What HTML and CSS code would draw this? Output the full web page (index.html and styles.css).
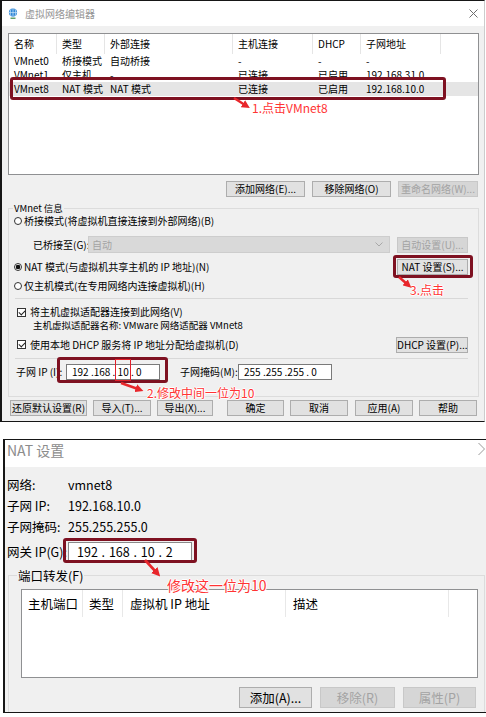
FILE: index.html
```html
<!DOCTYPE html>
<html lang="zh-CN">
<head>
  <meta charset="UTF-8" />
  <meta name="viewport" content="width=device-width, initial-scale=1.0"/>
  <title>虚拟网络编辑器 - NAT 设置</title>
  <link rel="stylesheet" href="styles.css">
</head>
<body>

<div class="win editor">
  <div class="titlebar">
    <svg class="app-icon" width="10" height="11" viewBox="0 0 10 11">
      <circle cx="5" cy="4.6" r="4.1" fill="#2f86d6"/>
      <path d="M1 4.6h8M5 0.6v8M3 1.2c-1 2-1 4.8 0 6.8M7 1.2c1 2 1 4.8 0 6.8" stroke="#d8ecfb" stroke-width="0.7" fill="none"/>
      <path d="M2.5 10.2h5" stroke="#3c8a46" stroke-width="1.2"/>
    </svg>
    <span class="title">虚拟网络编辑器</span>
    <svg class="close" width="9" height="9" viewBox="0 0 9 9">
      <path d="M0.5 0.5L8.5 8.5M8.5 0.5L0.5 8.5" stroke="#6e6e6e" stroke-width="1"/>
    </svg>
  </div>

  <div class="client">
    <div class="netlist">
      <div class="row head">
        <span>名称</span><span>类型</span><span>外部连接</span><span>主机连接</span><span>DHCP</span><span>子网地址</span><span></span>
      </div>
      <div class="row">
        <span>VMnet0</span><span>桥接模式</span><span>自动桥接</span><span>-</span><span>-</span><span>-</span><span></span>
      </div>
      <div class="row">
        <span>VMnet1</span><span>仅主机...</span><span>-</span><span>已连接</span><span>已启用</span><span>192.168.31.0</span><span></span>
      </div>
      <div class="row selected">
        <span>VMnet8</span><span>NAT 模式</span><span>NAT 模式</span><span>已连接</span><span>已启用</span><span>192.168.10.0</span><span></span>
      </div>
    </div>

    <div class="btn-row list-btns">
      <button class="w79">添加网络(E)...</button>
      <button class="w79">移除网络(O)</button>
      <button class="w80" disabled>重命名网络(W)...</button>
    </div>

    <div class="group">
      <div class="group-title">VMnet 信息</div>

      <div class="line opt-first">
        <span class="radio"></span>桥接模式(将虚拟机直接连接到外部网络)(B)
      </div>

      <div class="line bridge-row">
        <span class="field-label">已桥接至(G):</span>
        <div class="select">
          <span>自动</span>
          <svg width="8" height="5" viewBox="0 0 8 5"><path d="M0.5 0.5L4 4L7.5 0.5" stroke="#a8a8a8" fill="none"/></svg>
        </div>
        <button class="w71" disabled>自动设置(U)...</button>
      </div>

      <div class="line nat-row">
        <span class="radio on"></span>NAT 模式(与虚拟机共享主机的 IP 地址)(N)
        <button class="w71 push">NAT 设置(S)...</button>
      </div>

      <div class="line host-row">
        <span class="radio"></span>仅主机模式(在专用网络内连接虚拟机)(H)
      </div>

      <div class="sep sep-first"></div>

      <div class="line check-row">
        <span class="check"></span>将主机虚拟适配器连接到此网络(V)
      </div>
      <div class="line adapter-name">主机虚拟适配器名称: VMware 网络适配器 VMnet8</div>

      <div class="line dhcp-row">
        <span class="check"></span>使用本地 DHCP 服务将 IP 地址分配给虚拟机(D)
        <button class="w72 push">DHCP 设置(P)...</button>
      </div>

      <div class="sep sep-second"></div>

      <div class="line subnet-row">
        <span class="subnet-label">子网 IP (I):</span>
        <span class="ip">192 .168 . 10 . 0</span>
        <span class="mask-label">子网掩码(M):</span>
        <span class="ip">255 .255 .255 . 0</span>
      </div>
    </div>

    <div class="btn-row bottom-btns">
      <button class="w77">还原默认设置(R)</button>
      <button class="w58">导入(T)...</button>
      <button class="w56">导出(X)...</button>
      <button class="w57 push">确定</button>
      <button class="w58">取消</button>
      <button class="w58 gap7">应用(A)</button>
      <button class="w58">帮助</button>
    </div>
  </div>
</div>

<div class="win nat">
  <div class="titlebar nat-title">
    <span class="title">NAT 设置</span>
  </div>
  <div class="client nat-client">
    <div class="kv"><span class="k">网络:</span><span>vmnet8</span></div>
    <div class="kv"><span class="k">子网 IP:</span><span>192.168.10.0</span></div>
    <div class="kv"><span class="k">子网掩码:</span><span>255.255.255.0</span></div>
    <div class="kv gw-row"><span class="k">网关 IP(G):</span><span class="ip gw">192 . 168 . 10 . 2</span></div>

    <div class="pf-group">
      <div class="group-title">端口转发(F)</div>
      <div class="pf-list">
        <div class="pf-head">
          <span>主机端口</span><span>类型</span><span>虚拟机 IP 地址</span><span>描述</span><span></span>
        </div>
      </div>
      <div class="btn-row pf-btns">
        <button class="w73">添加(A)...</button>
        <button class="w75" disabled>移除(R)</button>
        <button class="w73" disabled>属性(P)</button>
      </div>
    </div>
  </div>
</div>

<!-- annotations drawn over the screenshots -->
<div class="mark m-row"></div>
<div class="mark m-nat-btn"></div>
<div class="mark m-subnet"></div>
<div class="mark-thin m-ten"></div>
<div class="mark m-gateway"></div>

<div class="note n1">1.点击VMnet8</div>
<div class="note n2">2.修改中间一位为10</div>
<div class="note n3">3.点击</div>
<div class="note n4">修改这一位为10</div>

<svg class="arrows" width="486" height="717" viewBox="0 0 486 717">
  <defs>
    <marker id="head" viewBox="0 0 10 10" refX="3" refY="5" markerWidth="3.4" markerHeight="3.4" orient="auto">
      <path d="M0 0L10 5L0 10z" fill="#e8262b"/>
    </marker>
  </defs>
  <path d="M234 98L245 105" stroke="#e8262b" stroke-width="2.4" marker-end="url(#head)"/>
  <path d="M121 383L138 389" stroke="#e8262b" stroke-width="2.4" marker-end="url(#head)"/>
  <path d="M399 277L407 284" stroke="#e8262b" stroke-width="2.4" marker-end="url(#head)"/>
  <path d="M145 560L156 572" stroke="#e8262b" stroke-width="2.6" marker-end="url(#head)"/>
  <path d="M478.5 443L484.5 449L478.5 455" stroke="#9a9a9a" fill="none"/>
</svg>

</body>
</html>
```

FILE: styles.css
```css
* {
  box-sizing: border-box;
}

body {
  margin: 0;
  width: 486px;
  height: 717px;
  overflow: hidden;
  position: relative;
  background: #ffffff;
  color: #000;
  font-family: "Noto Sans CJK SC", sans-serif;
  font-size: 10px;
  line-height: 12px;
}

button {
  font: inherit;
  color: #000;
  background: #e1e1e1;
  border: 1px solid #adadad;
  padding: 0;
  height: 16px;
  line-height: 14px;
  text-align: center;
  white-space: nowrap;
}

button:disabled {
  background: #d6d6d6;
  border-color: #c8c8c8;
  color: #a3a3a3;
}

.w56 { width: 56px; }
.w57 { width: 57px; }
.w58 { width: 58px; }
.w71 { width: 71px; }
.w72 { width: 72px; }
.w73 { width: 73px; }
.w75 { width: 75px; }
.w77 { width: 77px; }
.w79 { width: 79px; }
.w80 { width: 80px; }

.push {
  margin-left: auto;
}

/* window frames */
.win {
  background: #f0f0f0;
}

.editor {
  width: 485px;
  height: 422px;
  border: solid #161616;
  border-width: 1px 1px 1px 2px;
  border-right-color: #cccccc;
}

.titlebar {
  display: flex;
  align-items: center;
  height: 25px;
  background: #fff;
  padding-left: 6px;
}

.app-icon {
  margin-right: 7px;
}

.title {
  color: #959595;
  font-size: 10px;
}

.close {
  margin-left: auto;
  margin-right: 6px;
}

.client {
  height: 394px;
  padding: 7px 5px 0 6px;
}

/* network list */
.netlist {
  height: 142px;
  background: #fff;
  border: 1px solid #8f9092;
}

.row {
  display: grid;
  grid-template-columns: 48px 48px 128px 80px 48px 80px 1fr;
  height: 14px;
  line-height: 14px;
}

.row span {
  padding-left: 5px;
  white-space: nowrap;
  overflow: hidden;
}

.row.head {
  height: 20px;
  line-height: 20px;
}

.row.head span {
  border-right: 1px solid #e5e5e5;
}

.row.head span:last-child {
  border-right: none;
}

.row.selected {
  background: #e5e5e5;
}

.btn-row {
  display: flex;
  gap: 7px;
}

.list-btns {
  justify-content: flex-end;
  margin-top: 6px;
  padding-right: 1px;
}

/* VMnet info group */
.group {
  height: 189px;
  margin-top: 11px;
  border: 1px solid #dcdcdc;
  padding: 0 10px 0 5px;
}

.group-title {
  display: table;
  margin: -6px 0 0 -1px;
  padding: 0 1px;
  background: #f0f0f0;
  font-size: 9.5px;
  line-height: 11px;
}

.line {
  display: flex;
  align-items: center;
  white-space: nowrap;
}

.opt-first {
  height: 11px;
  margin-top: 1px;
}

.radio {
  width: 8px;
  height: 8px;
  border: 1px solid #333;
  border-radius: 50%;
  background: #fff;
  margin-right: 2px;
  flex: none;
}

.radio.on {
  background: radial-gradient(circle, #111 0 2px, #fff 2.6px);
}

.bridge-row {
  height: 17px;
  margin-top: 10px;
}

.field-label {
  width: 74px;
  padding-left: 19px;
  flex: none;
}

.select {
  flex: 1;
  height: 17px;
  margin-right: 7px;
  background: #d9d9d9;
  border: 1px solid #cdcdcd;
  color: #a3a3a3;
  display: flex;
  align-items: center;
  justify-content: space-between;
  padding: 0 6px 0 3px;
}

.nat-row {
  height: 16px;
  margin-top: 6px;
}

.host-row {
  height: 12px;
  margin-top: 5px;
}

.sep {
  height: 1px;
  background: #d8d8d8;
  margin-left: 1px;
}

.sep-first {
  margin-top: 6px;
}

.check-row {
  height: 12px;
  margin-top: 7px;
}

.check {
  width: 9px;
  height: 9px;
  border: 1px solid #333;
  background: #fff;
  margin: 0 4px 0 3px;
  flex: none;
  position: relative;
}

.check::after {
  content: "";
  position: absolute;
  left: 2px;
  top: 0;
  width: 3px;
  height: 5px;
  border: solid #222;
  border-width: 0 1.2px 1.2px 0;
  transform: rotate(45deg);
}

.adapter-name {
  height: 12px;
  margin-top: 1px;
  padding-left: 19px;
  font-size: 9.5px;
}

.dhcp-row {
  height: 17px;
  margin-top: 5px;
}

.sep-second {
  margin-top: 5px;
}

.subnet-row {
  height: 16px;
  margin-top: 5px;
}

.subnet-label {
  width: 52px;
  flex: none;
  padding-left: 2px;
  overflow: hidden;
}

.mask-label {
  margin-left: 20px;
  width: 58px;
}

.ip {
  display: block;
  width: 94px;
  height: 16px;
  line-height: 14px;
  padding-left: 5px;
  background: #fff;
  border: 1px solid #7a7a7a;
  white-space: pre;
}

.bottom-btns {
  margin-top: 3px;
  gap: 6px;
  padding: 0 2px;
}

.gap7 {
  margin-left: 1px;
}

/* NAT settings window */
.nat {
  width: 483px;
  height: 274px;
  margin: 17px 0 0 3px;
  border: solid #161616;
  border-width: 1px 0 1px 2px;
  overflow: hidden;
}

.nat-title {
  height: 27px;
  padding-left: 2px;
  align-items: flex-start;
  padding-top: 2px;
}

.nat-title .title {
  font-size: 14px;
  line-height: 16px;
  color: #8c8c8c;
}

.nat-client {
  height: 244px;
  padding: 11px 0 0 2px;
  font-size: 12.5px;
  line-height: 14px;
}

.kv {
  display: flex;
  align-items: center;
  height: 14px;
  margin-bottom: 7px;
  white-space: nowrap;
}

.kv .k {
  width: 61px;
  flex: none;
}

.gw-row {
  height: 20px;
  margin-top: 8px;
  margin-bottom: 0;
}

.ip.gw {
  width: 124px;
  height: 20px;
  line-height: 18px;
  padding-left: 8px;
  border-color: #8a8a8a;
  word-spacing: 1px;
}

.pf-group {
  margin: 13px 0 0 1px;
  width: 477px;
  height: 200px;
  border: 1px solid #dcdcdc;
  padding: 0 6px 0 12px;
}

.pf-group .group-title {
  margin: -7px 0 0 -4px;
  font-size: 12.5px;
  line-height: 14px;
}

.pf-list {
  margin-top: 6px;
  height: 89px;
  background: #fff;
  border: 1px solid #8f9092;
}

.pf-head {
  display: grid;
  grid-template-columns: 61px 40px 163px 163px 1fr;
  height: 27px;
  line-height: 27px;
}

.pf-head span {
  padding-left: 6px;
  border-right: 1px solid #e8e8e8;
  white-space: nowrap;
}

.pf-head span:nth-child(3),
.pf-head span:nth-child(4) {
  padding-left: 7px;
}

.pf-head span:last-child {
  border-right: none;
}

.pf-btns {
  margin-top: 9px;
  justify-content: flex-end;
  gap: 8px;
  padding-right: 2px;
}

.pf-btns button {
  height: 21px;
  line-height: 19px;
}

/* red annotation boxes, labels and arrows */
.mark {
  position: absolute;
  border: 3.5px solid #7e1121;
  border-radius: 3px;
}

.m-row { left: 10px; top: 77px; width: 436px; height: 23px; }
.m-nat-btn { left: 393px; top: 255px; width: 80px; height: 23px; }
.m-subnet { left: 57px; top: 357px; width: 111px; height: 26px; }
.m-gateway { left: 63px; top: 538px; width: 134px; height: 25px; }

.mark-thin {
  position: absolute;
  border: 1.5px solid #e3202a;
}

.m-ten { left: 115px; top: 359px; width: 16px; height: 22px; }

.note {
  position: absolute;
  color: #ff3434;
  font-size: 12px;
  line-height: 16px;
  white-space: nowrap;
  text-shadow: -1px 0 #fff, 1px 0 #fff, 0 -1px #fff, 0 1px #fff;
}

.n1 { left: 252px; top: 100px; }
.n2 { left: 147px; top: 385px; }
.n3 { left: 410px; top: 282px; }
.n4 { left: 167px; top: 576px; font-size: 14px; line-height: 18px; }

.arrows {
  position: absolute;
  left: 0;
  top: 0;
  pointer-events: none;
}
```
